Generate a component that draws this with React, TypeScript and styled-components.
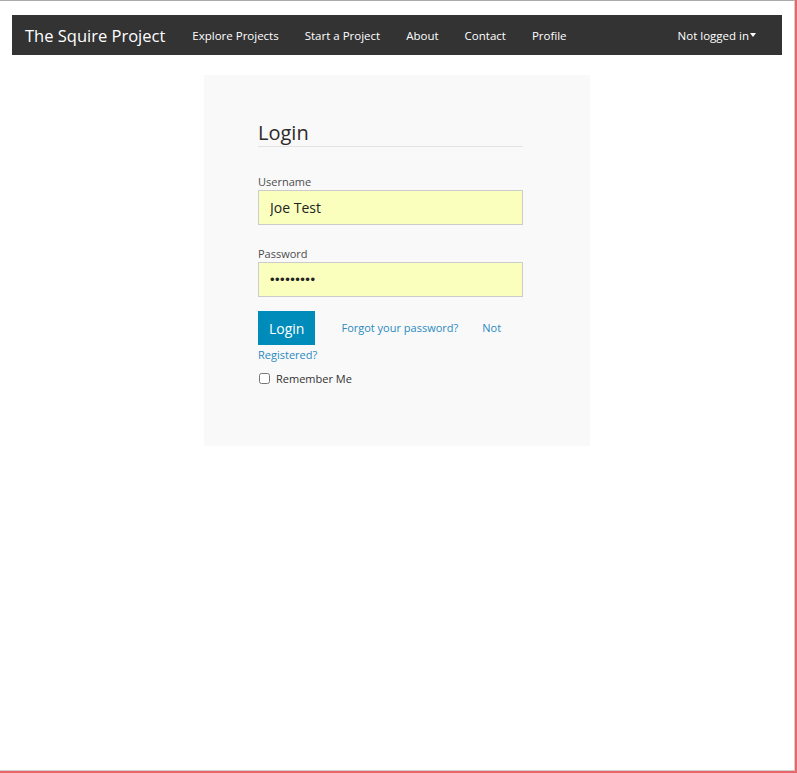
import React from "react";
import styled, { createGlobalStyle } from "styled-components";

const Global = createGlobalStyle`
  html, body { margin: 0; padding: 0; background: #fff; }
  body { font-family: "Open Sans", "Liberation Sans", sans-serif; }
  * { box-sizing: border-box; }
`;

const Outer = styled.div`
  width: 797px;
  height: 773px;
  border-right: 2px solid #e8666a;
  border-bottom: 2px solid #e8666a;
`;

const Frame = styled.div`
  height: 100%;
  border-top: 1px solid #aaaaaa;
  border-right: 1px solid #d0d0d0;
  border-bottom: 1px solid #d0d0d0;
  padding: 14px 12px 0 12px;
`;

const NavBar = styled.nav`
  height: 40px;
  background: #333333;
  display: flex;
  align-items: center;
  padding: 0 13px;
  color: #fff;
`;

const Brand = styled.a`
  font-size: 16.5px;
  color: #fff;
  text-decoration: none;
  margin-right: 14px;
  white-space: nowrap;
`;

const NavLinks = styled.ul`
  display: flex;
  list-style: none;
  margin: 0;
  padding: 0;
  flex: 1;
`;

const NavItem = styled.li<{ $right?: boolean }>`
  margin-left: ${(p) => (p.$right ? "auto" : "0")};
`;

const NavLink = styled.a`
  display: flex;
  align-items: center;
  padding: 0 13px;
  font-size: 11.5px;
  color: #fff;
  text-decoration: none;
  white-space: nowrap;
`;

const Caret = styled.span`
  display: inline-block;
  width: 0;
  height: 0;
  border-left: 3px solid transparent;
  border-right: 3px solid transparent;
  border-top: 4px solid #fff;
  margin-left: 1px;
`;

const Main = styled.main`
  display: flex;
  justify-content: center;
  padding-top: 20px;
`;

const Card = styled.section`
  width: 386px;
  height: 371px;
  background: #f9f9f9;
  padding: 46px 67px 0 54px;
`;

const Heading = styled.h2`
  margin: 0;
  font-size: 20px;
  font-weight: 400;
  line-height: 24px;
  color: #2f2a2a;
  border-bottom: 1px solid #e3e3e3;
  padding-bottom: 1px;
`;

const Field = styled.div<{ $top: number }>`
  margin-top: ${(p) => p.$top}px;
`;

const Label = styled.label`
  display: block;
  font-size: 11px;
  line-height: 13px;
  padding-bottom: 2px;
  color: #4d4d4d;
`;

const Input = styled.input`
  display: block;
  width: 100%;
  height: 35px;
  margin: 0;
  border: 1px solid #cccccc;
  background: #faffbd;
  padding: 0 11px;
  font-family: "Open Sans", "Liberation Sans", sans-serif;
  font-size: 14px;
  color: #222;
  outline: none;
  &[type="password"] {
    font-family: "Liberation Sans", sans-serif;
    font-size: 13px;
    letter-spacing: 0.5px;
  }
`;

const Actions = styled.div`
  margin-top: 14px;
  display: flex;
  flex-wrap: wrap;
  align-items: center;
  font-size: 11px;
  line-height: 18px;
`;

const Button = styled.button`
  height: 34px;
  padding: 0 11px;
  border: none;
  background: #008cba;
  color: #fff;
  font-family: "Open Sans", "Liberation Sans", sans-serif;
  font-size: 14px;
  cursor: pointer;
`;

const TextLink = styled.a<{ $gap?: number; $newLine?: boolean }>`
  color: #2a8ac0;
  text-decoration: none;
  margin-left: ${(p) => p.$gap ?? 0}px;
  flex-basis: ${(p) => (p.$newLine ? "100%" : "auto")};
  margin-top: ${(p) => (p.$newLine ? "1px" : "0")};
`;

const Remember = styled.label`
  display: flex;
  align-items: center;
  gap: 6px;
  margin-top: 7px;
  font-size: 11px;
  color: #333;
`;

const Check = styled.input`
  margin: 0 0 0 1px;
  width: 11px;
  height: 11px;
`;

export default function App() {
  return (
    <>
      <Global />
      <Outer>
        <Frame>
          <NavBar>
            <Brand href="#">The Squire Project</Brand>
            <NavLinks>
              <NavItem><NavLink href="#">Explore Projects</NavLink></NavItem>
              <NavItem><NavLink href="#">Start a Project</NavLink></NavItem>
              <NavItem><NavLink href="#">About</NavLink></NavItem>
              <NavItem><NavLink href="#">Contact</NavLink></NavItem>
              <NavItem><NavLink href="#">Profile</NavLink></NavItem>
              <NavItem $right>
                <NavLink href="#">Not logged in<Caret /></NavLink>
              </NavItem>
            </NavLinks>
          </NavBar>
          <Main>
            <Card>
              <Heading>Login</Heading>
              <Field $top={28}>
                <Label>Username</Label>
                <Input type="text" defaultValue="Joe Test" />
              </Field>
              <Field $top={22}>
                <Label>Password</Label>
                <Input type="password" defaultValue="123456789" />
              </Field>
              <Actions>
                <Button>Login</Button>
                <TextLink href="#" $gap={26}>Forgot your password?</TextLink>
                <TextLink href="#" $gap={24}>Not</TextLink>
                <TextLink href="#" $newLine>Registered?</TextLink>
              </Actions>
              <Remember>
                <Check type="checkbox" />
                Remember Me
              </Remember>
            </Card>
          </Main>
        </Frame>
      </Outer>
    </>
  );
}
